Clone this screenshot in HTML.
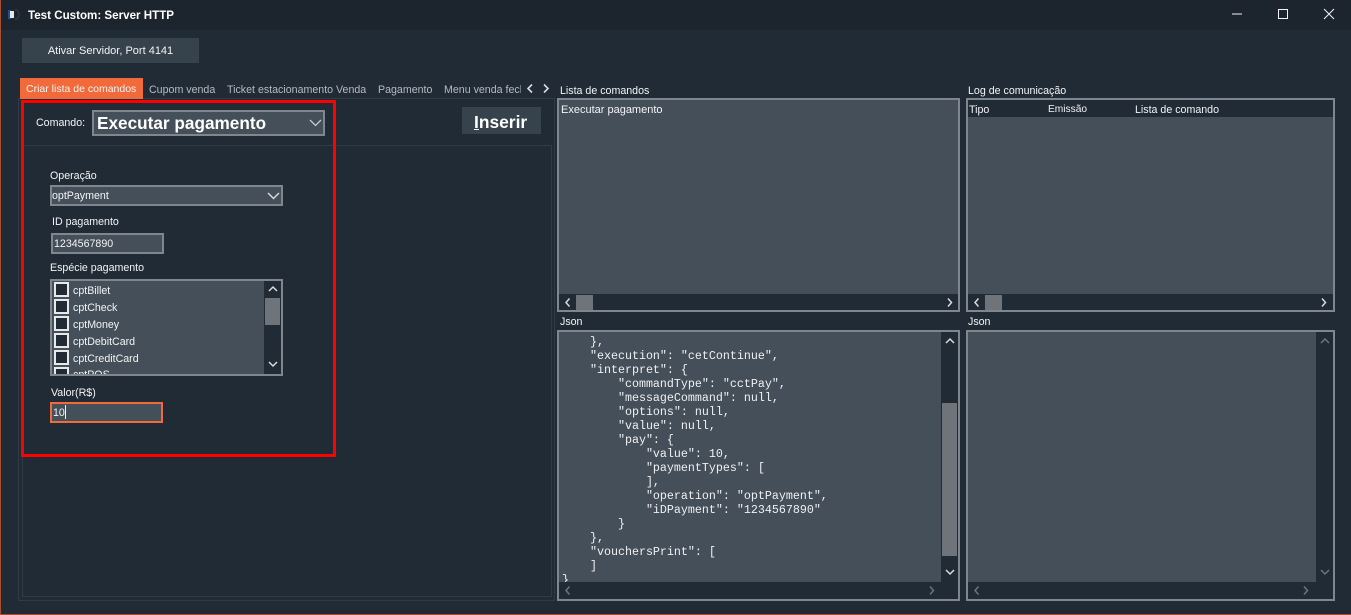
<!DOCTYPE html>
<html lang="pt"><head><meta charset="utf-8"><title>Test Custom: Server HTTP</title>
<style>
html,body{margin:0;padding:0;width:1351px;height:615px;overflow:hidden;background:#212b35}
body{position:relative;font-family:"Liberation Sans",sans-serif;font-size:10.65px;color:#f2f4f5}
div,span,svg{position:absolute;box-sizing:border-box}
.t{white-space:nowrap;line-height:14px;height:14px;margin-top:1px}
.g{color:#b4bac0}
.box{background:#454f59;border:2px solid #7f868d}
.bar{background:#212b35}
.thumb{background:#6e7479}
.cb{left:54px;width:15px;height:15px;border:2px solid #e6e8ea;background:#212b35}
.line{border:1px solid #2f3c47}
pre{position:absolute;margin:0;font:11.67px/14px "Liberation Mono",monospace;color:#eef0f2}
svg{overflow:visible}
</style></head><body>
<!-- title bar -->
<div style="left:0;top:0;width:1351px;height:30px;background:#1c242e"></div>
<div style="left:0;top:0;width:1px;height:615px;background:#a84f30"></div>
<div style="left:0;top:614px;width:1351px;height:1px;background:#a84f30"></div>
<svg style="left:8px;top:9px" width="12" height="12" viewBox="0 0 12 12"><rect x="0" y="1" width="3" height="9" fill="#1f4f9a"/><rect x="2" y="2" width="4" height="7" fill="#e8e8e0"/><path d="M7 1h2l2 3v3l-2 3H7" fill="none" stroke="#3a4048"/></svg>
<div class="t" style="left:28px;top:8px;font-weight:bold;font-size:11.6px;color:#fff">Test Custom: Server HTTP</div>
<svg style="left:1232px;top:9px" width="102" height="10" viewBox="0 0 102 10" fill="none" stroke="#f4f5f6"><path d="M0 5h10"/><rect x="46.5" y=".5" width="9" height="9"/><path d="M92 0l10 10M102 0L92 10"/></svg>

<!-- activate button -->
<div style="left:22px;top:38px;width:177px;height:25px;background:#36424c"></div>
<div class="t" style="left:22px;top:43px;width:177px;text-align:center;font-size:11px">Ativar Servidor, Port 4141</div>

<!-- tab pane -->
<div class="line" style="left:18px;top:98px;width:537px;height:503px"></div>
<div class="line" style="left:22px;top:145px;width:530px;height:452px"></div>
<div style="left:20px;top:78px;width:123px;height:21px;background:#f2693a"></div>
<div class="t" style="left:26px;top:81px;font-size:10.5px">Criar lista de comandos</div>
<div class="t g" style="left:149px;top:82px">Cupom venda</div>
<div class="t g" style="left:227px;top:82px">Ticket estacionamento Venda</div>
<div class="t g" style="left:378px;top:82px">Pagamento</div>
<div class="t g" style="left:444px;top:82px;width:77px;overflow:hidden">Menu venda fechar</div>
<svg style="left:527px;top:84px" width="23" height="9" viewBox="0 0 23 9" fill="none" stroke="#d8dbde" stroke-width="1.6"><path d="M5 .5L1 4.500l4 4M17 .5l4 4-4 4"/></svg>

<!-- command row -->
<div class="t" style="left:36px;top:115px">Comando:</div>
<div class="box" style="left:92px;top:110px;width:233px;height:26px"></div>
<div class="t" style="left:97px;top:113px;height:18px;line-height:18px;font-weight:bold;font-size:17.2px;color:#fff">Executar pagamento</div>
<svg style="left:309px;top:119px" width="13" height="8" viewBox="0 0 13 8" fill="none" stroke="#c6cacd" stroke-width="1.3"><path d="M1 1l5.500 5.500L12 1"/></svg>
<div style="left:462px;top:107px;width:79px;height:27px;background:#36424c"></div>
<div class="t" style="left:474px;top:112px;height:18px;line-height:18px;font-weight:bold;font-size:17.4px;color:#fff"><u style="text-underline-offset:1px">I</u>nserir</div>

<!-- form -->
<div class="t" style="left:50px;top:168px">Operação</div>
<div class="box" style="left:50px;top:185px;width:233px;height:21px"></div>
<div class="t" style="left:52px;top:188px">optPayment</div>
<svg style="left:267px;top:192px" width="13" height="8" viewBox="0 0 13 8" fill="none" stroke="#d6d9dc" stroke-width="1.5"><path d="M1 1l5.500 5.500L12 1"/></svg>
<div class="t" style="left:52px;top:214px">ID pagamento</div>
<div class="box" style="left:51px;top:233px;width:113px;height:21px"></div>
<div class="t" style="left:54px;top:236px">1234567890</div>
<div class="t" style="left:50px;top:260px">Espécie pagamento</div>

<div class="box" style="left:50px;top:279px;width:233px;height:97px;overflow:hidden"></div>
<div class="bar" style="left:264px;top:281px;width:17px;height:93px"></div>
<div class="thumb" style="left:265px;top:298px;width:15px;height:27px"></div>
<svg style="left:268px;top:286px" width="10" height="82" viewBox="0 0 10 82" fill="none" stroke="#d8dbde" stroke-width="1.5"><path d="M1 5l4-4 4 4M1 76l4 4 4-4"/></svg>
<div class="cb" style="top:282px"></div><div class="t" style="left:73px;top:283px">cptBillet</div>
<div class="cb" style="top:299px"></div><div class="t" style="left:73px;top:300px">cptCheck</div>
<div class="cb" style="top:316px"></div><div class="t" style="left:73px;top:317px">cptMoney</div>
<div class="cb" style="top:333px"></div><div class="t" style="left:73px;top:334px">cptDebitCard</div>
<div class="cb" style="top:350px"></div><div class="t" style="left:73px;top:351px">cptCreditCard</div>
<div style="left:52px;top:367px;width:212px;height:7px;overflow:hidden"><div class="cb" style="left:2px;top:0"></div><div class="t" style="left:21px;top:0">cptPOS</div></div>

<div class="t" style="left:51px;top:385px">Valor(R$)</div>
<div class="box" style="left:50px;top:402px;width:113px;height:21px;border-color:#f2693a"></div>
<div class="t" style="left:53px;top:405px">10</div>
<div style="left:65px;top:405px;width:1px;height:14px;background:#f2f4f5"></div>

<!-- red highlight -->
<div style="left:21px;top:100px;width:315px;height:357px;border:3px solid #fe0000"></div>

<!-- lista de comandos -->
<div class="t" style="left:560px;top:83px">Lista de comandos</div>
<div class="box" style="left:557px;top:98px;width:403px;height:214px"></div>
<div class="t" style="left:561px;top:102px;font-size:11px">Executar pagamento</div>
<div class="bar" style="left:559px;top:294px;width:399px;height:16px"></div>
<div class="thumb" style="left:576px;top:295px;width:17px;height:15px"></div>
<svg style="left:565px;top:298px" width="388" height="9" viewBox="0 0 388 9" fill="none" stroke="#d8dbde" stroke-width="1.5"><path d="M4.500 .5L1 4.500l3.500 4M383 .5l3.500 4-3.500 4"/></svg>

<!-- log -->
<div class="t" style="left:968px;top:83px">Log de comunicação</div>
<div class="box" style="left:966px;top:98px;width:369px;height:214px"></div>
<div style="left:968px;top:100px;width:365px;height:17px;background:#212b35"></div>
<div class="t" style="left:969px;top:102px">Tipo</div>
<div class="t" style="left:1048px;top:102px;font-size:10.2px">Emissão</div>
<div class="t" style="left:1135px;top:102px">Lista de comando</div>
<div class="bar" style="left:968px;top:294px;width:365px;height:16px"></div>
<div class="thumb" style="left:985px;top:295px;width:17px;height:15px"></div>
<svg style="left:974px;top:298px" width="354" height="9" viewBox="0 0 354 9" fill="none" stroke="#d8dbde" stroke-width="1.5"><path d="M4.500 .5L1 4.500l3.500 4M348 .5l3.500 4-3.500 4"/></svg>

<!-- json left -->
<div class="t" style="left:560px;top:314px">Json</div>
<div class="box" style="left:557px;top:330px;width:403px;height:271px"></div>
<div style="left:559px;top:332px;width:382px;height:250px;overflow:hidden"><pre style="left:3px;top:3px">    },
    "execution": "cetContinue",
    "interpret": {
        "commandType": "cctPay",
        "messageCommand": null,
        "options": null,
        "value": null,
        "pay": {
            "value": 10,
            "paymentTypes": [
            ],
            "operation": "optPayment",
            "iDPayment": "1234567890"
        }
    },
    "vouchersPrint": [
    ]
}</pre></div>
<div class="bar" style="left:941px;top:332px;width:17px;height:267px"></div>
<div class="bar" style="left:559px;top:582px;width:399px;height:17px"></div>
<div class="thumb" style="left:942px;top:403px;width:15px;height:153px"></div>
<svg style="left:945px;top:338px" width="10" height="238" viewBox="0 0 10 238" fill="none" stroke="#d8dbde" stroke-width="1.5"><path d="M1 5l4-4 4 4M1 232l4 4 4-4"/></svg>
<svg style="left:565px;top:586px" width="370" height="9" viewBox="0 0 370 9" fill="none" stroke="#6e7479" stroke-width="1.5"><path d="M4.500 .5L1 4.500l3.500 4M365 .5l3.500 4-3.500 4"/></svg>

<!-- json right -->
<div class="t" style="left:968px;top:314px">Json</div>
<div class="box" style="left:966px;top:330px;width:369px;height:271px"></div>
<div class="bar" style="left:1316px;top:332px;width:17px;height:267px"></div>
<div class="bar" style="left:968px;top:582px;width:365px;height:17px"></div>
<svg style="left:1320px;top:338px" width="10" height="238" viewBox="0 0 10 238" fill="none" stroke="#6e7479" stroke-width="1.5"><path d="M1 5l4-4 4 4M1 232l4 4 4-4"/></svg>
<svg style="left:974px;top:586px" width="336" height="9" viewBox="0 0 336 9" fill="none" stroke="#6e7479" stroke-width="1.5"><path d="M4.500 .5L1 4.500l3.500 4M330 .5l3.500 4-3.500 4"/></svg>
</body></html>
